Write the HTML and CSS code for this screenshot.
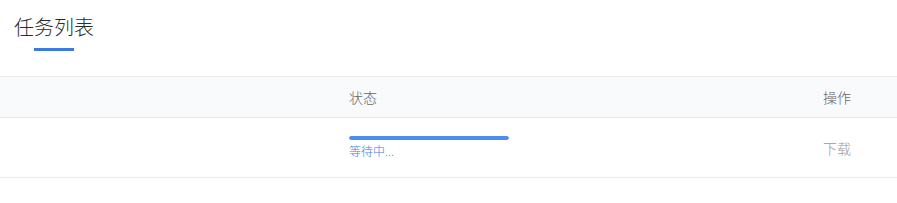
FILE: index.html
```html
<!DOCTYPE html>
<html>
<head>
    <meta charset="utf-8">
    <link rel="stylesheet" href="styles.css">
</head>
<body>
    <div class="page-head">
        <div class="page-title">任务列表</div>
        <div class="title-bar"></div>
    </div>

    <div class="task-table">
        <div class="table-row table-header">
            <div class="cell"></div>
            <div class="cell">状态</div>
            <div class="cell">操作</div>
        </div>
        <div class="table-row">
            <div class="cell"></div>
            <div class="cell status-cell">
                <div class="progress"><div class="progress-fill" style="width: 100%"></div></div>
                <div class="status-text">等待中...</div>
            </div>
            <div class="cell action">下载</div>
        </div>
    </div>
</body>
</html>
```

FILE: styles.css
```css
body {
    margin: 0;
    background: #ffffff;
    font-family: "Noto Sans CJK SC", "Microsoft YaHei", sans-serif;
    font-weight: 300;
    color: #333;
}
.page-head {
    padding: 13px 14px 0;
    height: 63px;
}
.page-title {
    font-size: 20px;
    line-height: 28px;
    color: #2b2b2b;
}
.title-bar {
    width: 40px;
    height: 3px;
    margin: 7px 0 0 20px;
    background: #3a7be3;
}
.task-table {
    border-top: 1px solid #e8eaee;
}
.table-row {
    display: grid;
    grid-template-columns: 339px 1fr 84px;
    align-items: center;
    height: 59px;
    border-bottom: 1px solid #e8eaee;
}
.table-header {
    height: 40px;
    background: #f9fafc;
    font-size: 14px;
    color: #666;
}
.cell {
    padding: 0 10px;
}
.status-cell {
    display: flex;
    flex-direction: column;
    gap: 2px;
}
.progress {
    width: 160px;
    height: 4px;
    border-radius: 2px;
    background: #e8eaee;
    overflow: hidden;
}
.progress-fill {
    height: 100%;
    background: #4a8ef0;
    border-radius: 2px;
}
.status-text {
    font-size: 12px;
    line-height: 18px;
    color: #3a7de4;
}
.action {
    font-size: 14px;
    color: #999;
}
```
